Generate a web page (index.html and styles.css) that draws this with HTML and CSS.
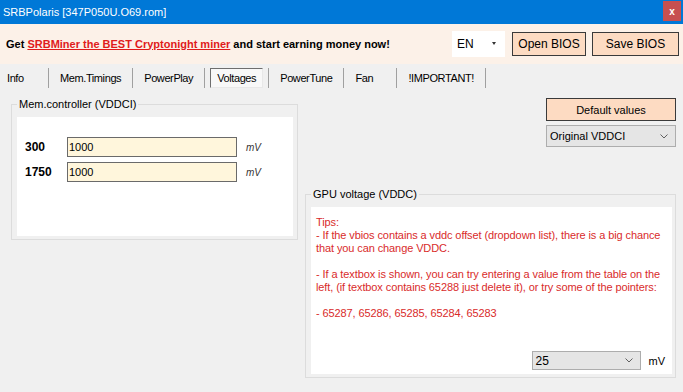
FILE: index.html
```html
<!DOCTYPE html>
<html lang='en'>

<head>
  <meta charset='UTF-8'>
  <meta name='viewport' content='width=device-width, initial-scale=1.0'>
  <title>SRBPolaris</title>
  <link rel="stylesheet" href="styles.css">
</head>

<body>
  <div class='titlebar'>
    <div class='title'>SRBPolaris [347P050U.O69.rom]</div>
    <div class='close'>x</div>
  </div>

  <div class='banner'>
    <div class='promo'>Get <a class='promo-link'>SRBMiner the BEST Cryptonight miner</a> and start earning money now!</div>
    <div class='banner-tools'>
      <div class='lang'>EN<span class='lang-arrow'></span></div>
      <button type='button' class='bios-btn open'>Open BIOS</button>
      <button type='button' class='bios-btn save'>Save BIOS</button>
    </div>
  </div>

  <div class='tabs'>
    <div class='tab first'>Info</div>
    <div class='tab'>Mem.Timings</div>
    <div class='tab'>PowerPlay</div>
    <div class='tab active'><span class='tab-box'>Voltages</span></div>
    <div class='tab'>PowerTune</div>
    <div class='tab'>Fan</div>
    <div class='tab'>!IMPORTANT!</div>
  </div>

  <div class='main'>
    <fieldset class='group mem-group'>
      <legend>Mem.controller (VDDCI)</legend>
      <div class='panel mem-panel'>
        <div class='volt-row'>
          <div class='freq'>300</div>
          <input class='volt-input' type='text' value='1000'>
          <div class='unit'>mV</div>
        </div>
        <div class='volt-row'>
          <div class='freq'>1750</div>
          <input class='volt-input' type='text' value='1000'>
          <div class='unit'>mV</div>
        </div>
      </div>
    </fieldset>

    <div class='right-col'>
      <div class='side-controls'>
        <button type='button' class='default-btn'>Default values</button>
        <div class='combo vddci-combo'>
          <span>Original VDDCI</span>
          <svg class='chevron' width='8' height='5' viewBox='0 0 8 5'><polyline points='0.5,0.5 4,4 7.5,0.5' /></svg>
        </div>
      </div>

      <fieldset class='group gpu-group'>
        <legend>GPU voltage (VDDC)</legend>
        <div class='panel gpu-panel'>
          <div class='tips'>
            Tips:<br>
            - If the vbios contains a vddc offset (dropdown list), there is a big chance<br>
            that you can change VDDC.<br>
            <br>
            - If a textbox is shown, you can try entering a value from the table on the<br>
            left, (if textbox contains 65288 just delete it), or try some of the pointers:<br>
            <br>
            - 65287, 65286, 65285, 65284, 65283
          </div>
          <div class='offset-row'>
            <div class='combo offset-combo'>
              <span>25</span>
              <svg class='chevron' width='8' height='5' viewBox='0 0 8 5'><polyline points='0.5,0.5 4,4 7.5,0.5' /></svg>
            </div>
            <div class='offset-unit'>mV</div>
          </div>
        </div>
      </fieldset>
    </div>
  </div>
</body>

</html>
```

FILE: styles.css
```css
html {
  width: 100%;
  height: 100%;
  margin: 0;
}

body {
  width: 683px;
  height: 392px;
  margin: 0;
  overflow: hidden;
  background-color: #f0f0f0;
  font-family: 'Liberation Sans', Arial, sans-serif;
  font-size: 11px;
  color: #000;
}

/* title bar */
.titlebar {
  height: 24px;
  background-color: #0078d7;
  display: flex;
  justify-content: space-between;
  align-items: center;
  padding-left: 3px;
}

.title {
  color: #fff;
  font-size: 11px;
}

.close {
  width: 18px;
  height: 20px;
  margin-right: 2px;
  align-self: flex-start;
  margin-top: 1px;
  background-color: #c75050;
  color: #fff;
  font-weight: bold;
  font-size: 10px;
  display: flex;
  justify-content: center;
  align-items: center;
}

/* banner */
.banner {
  height: 39px;
  background-color: #fcf1e8;
  display: flex;
  justify-content: space-between;
  align-items: center;
  padding: 0 4px 1px 6px;
}

.promo {
  font-weight: bold;
  font-size: 11px;
}

.promo-link {
  color: #e01b1b;
  text-decoration: underline;
}

.banner-tools {
  display: flex;
  align-items: center;
}

.lang {
  width: 53px;
  height: 26px;
  background-color: #fff;
  display: flex;
  align-items: center;
  justify-content: space-between;
  padding: 0 9px 0 5px;
  box-sizing: border-box;
  font-size: 12px;
}

.lang-arrow {
  width: 0;
  height: 0;
  border-left: 2.5px solid transparent;
  border-right: 2.5px solid transparent;
  border-top: 3px solid #333;
}

.bios-btn {
  height: 24px;
  background-color: #fddbc2;
  border: 1px solid #3a3a3a;
  border-radius: 0;
  font-family: 'Liberation Sans', Arial, sans-serif;
  font-size: 12px;
  color: #000;
  padding: 0;
}

.open {
  width: 74px;
  margin-left: 7px;
}

.save {
  width: 87px;
  margin-left: 6px;
}

/* tabs */
.tabs {
  display: flex;
  padding: 4px 0 1px 0;
  letter-spacing: -0.4px;
}

.tab {
  height: 20px;
  line-height: 20px;
  min-width: 30px;
  padding: 0 11px;
  border-right: 1px solid #a0a0a0;
}

.tab.first {
  padding-left: 7px;
}

.tab.active {
  padding: 0 5px;
}

.tab-box {
  display: block;
  height: 18px;
  line-height: 19px;
  padding: 0 6px;
  background-color: #f8f8f8;
  border: 1px solid;
  border-color: #6e6e6e #e8e8e8 #e8e8e8 #6e6e6e;
}

/* content */
.main {
  display: flex;
  gap: 7px;
  padding: 8px 7px 0 11px;
}

.group {
  margin: 0;
  min-width: 0;
  border: 1px solid #dcdcdc;
  box-sizing: border-box;
}

.group legend {
  font-size: 11px;
  line-height: 14px;
  padding: 0 2px;
}

.panel {
  background-color: #fff;
}

.mem-group {
  width: 287px;
  height: 143px;
  align-self: flex-start;
  padding: 6px 4px 3px 5px;
}

.mem-panel {
  height: 119px;
  padding: 20px 0 0 8px;
  box-sizing: border-box;
  display: flex;
  flex-direction: column;
  gap: 5px;
}

.volt-row {
  display: flex;
  align-items: center;
}

.freq {
  width: 42px;
  font-weight: bold;
  font-size: 12px;
}

.volt-input {
  width: 170px;
  height: 20px;
  box-sizing: border-box;
  border: 1px solid #6a6a6a;
  background-color: #fff6dc;
  font-family: 'Liberation Sans', Arial, sans-serif;
  font-size: 11px;
  padding: 0 1px;
  margin: 0;
}

.unit {
  margin-left: 9px;
  font-style: italic;
  font-size: 10px;
  color: #333;
}

.right-col {
  width: 371px;
  display: flex;
  flex-direction: column;
}

.side-controls {
  width: 130px;
  align-self: flex-end;
  margin-top: 1px;
  display: flex;
  flex-direction: column;
  gap: 4px;
}

.default-btn {
  height: 23px;
  background-color: #fddbc2;
  border: 1px solid #3a3a3a;
  border-radius: 0;
  font-family: 'Liberation Sans', Arial, sans-serif;
  font-size: 11px;
  color: #000;
  padding: 0;
}

.combo {
  background-color: #e5e5e5;
  border: 1px solid #adadad;
  box-sizing: border-box;
  display: flex;
  justify-content: space-between;
  align-items: center;
  padding: 0 7px 0 3px;
}

.vddci-combo {
  height: 22px;
}

.chevron polyline {
  fill: none;
  stroke: #606060;
  stroke-width: 1;
}

.gpu-group {
  margin-top: 40px;
  padding: 6px 3px 3px 5px;
}

.gpu-panel {
  height: 167px;
  box-sizing: border-box;
  padding: 9px 7px 4px 5px;
  display: flex;
  flex-direction: column;
  justify-content: space-between;
}

.tips {
  color: #d92b2b;
  font-size: 11px;
  line-height: 13px;
  letter-spacing: -0.1px;
  white-space: nowrap;
}

.offset-row {
  display: flex;
  justify-content: flex-end;
  align-items: center;
}

.offset-combo {
  width: 109px;
  height: 19px;
  font-size: 12px;
}

.offset-unit {
  margin-left: 8px;
  font-size: 11px;
}
```
